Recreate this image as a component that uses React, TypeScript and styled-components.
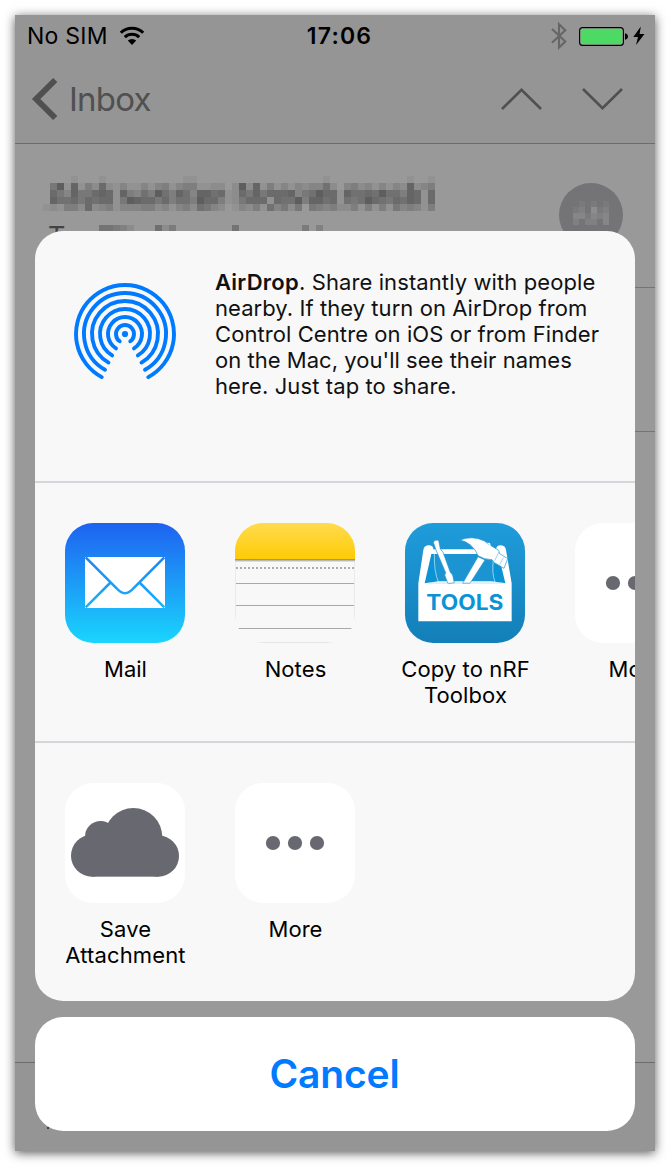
import React from "react";
import styled, { createGlobalStyle } from "styled-components";

const GlobalStyle = createGlobalStyle`
  * { box-sizing: border-box; }
  body { margin: 0; background: #fff; font-family: Inter, "Liberation Sans", sans-serif; color: #000; overflow: hidden; }
  svg { display: block; flex: none; }
  button { font: inherit; border: 0; padding: 0; background: none; }
`;

const Page = styled.main`
  height: 1166px;
  padding: 15px;
  overflow: hidden;
`;

const Phone = styled.div`
  position: relative;
  width: 640px;
  height: 1136px;
  display: flex;
  flex-direction: column;
  background: #999;
  box-shadow: 0 2px 10px rgba(0, 0, 0, 0.65);
`;

const Header = styled.header`
  height: 129px;
  background: #959595;
  border-bottom: 1px solid #6c6c6c;
`;

const StatusBar = styled.div`
  height: 40px;
  display: grid;
  grid-template-columns: 1fr auto 1fr;
  align-items: center;
  padding: 2px 10px 0 12px;
`;

const StatusGroup = styled.div<{ $end?: boolean }>`
  display: flex;
  align-items: center;
  justify-content: ${(p) => (p.$end ? "flex-end" : "flex-start")};
`;

const StatusText = styled.span<{ $bold?: boolean; $spacing: number }>`
  font-size: 23px;
  line-height: 28px;
  padding-left: ${(p) => (p.$bold ? 7 : 0)}px;
  font-weight: ${(p) => (p.$bold ? 600 : 400)};
  letter-spacing: ${(p) => p.$spacing}px;
`;

const NavBar = styled.nav`
  height: 88px;
  display: flex;
  align-items: center;
  padding: 0 32px 0 15px;
`;

const BackLabel = styled.span`
  flex: 1;
  margin-left: 11px;
  font-size: 33px;
  line-height: 40px;
  letter-spacing: -0.75px;
  color: #505050;
`;

const NavArrows = styled.div`
  display: flex;
  gap: 39px;
`;

const MessageHead = styled.section`
  height: 144px;
  margin-left: 28px;
  display: flex;
  justify-content: space-between;
  padding: 32px 32px 0 0;
  border-bottom: 1px solid #747474;
`;

const Sender = styled.div`
  display: flex;
  flex-direction: column;
`;

const Recipient = styled.div`
  display: flex;
  align-items: flex-start;
  gap: 12px;
  padding: 9px 0 0 5px;
  font-size: 27px;
  line-height: 34px;
  color: #444;

  svg {
    margin-top: 5px;
  }
`;

const Avatar = styled.div`
  width: 64px;
  height: 64px;
  margin-top: 7px;
  padding: 18px 0 0 14px;
  border-radius: 50%;
  background: #747477;
`;

const SubjectRow = styled.section`
  flex: none;
  height: 144px;
  margin-left: 28px;
  border-bottom: 1px solid #747474;
`;

const MessageBody = styled.section`
  flex: 1;
`;

const Toolbar = styled.footer`
  height: 89px;
  padding: 64px 0 0 32px;
  background: #959595;
  border-top: 1px solid #6c6c6c;
`;

const Overlay = styled.div`
  position: absolute;
  inset: 216px 20px 20px;
  display: flex;
  flex-direction: column;
  gap: 16px;
`;

const Sheet = styled.section`
  height: 770px;
  border-radius: 28px;
  background: #f8f8f8;
  overflow: hidden;
`;

const AirDropRow = styled.div`
  height: 250px;
  display: flex;
  align-items: flex-start;
`;

const AirDropMark = styled.div`
  padding: 50px 38px 0;
`;

const AirDropText = styled.p`
  margin: 0;
  padding: 38px 0 0;
  font-size: 22px;
  line-height: 26px;
  color: #111;
  white-space: nowrap;

  b {
    font-weight: 600;
    letter-spacing: 0.25px;
  }
`;

const Line = styled.span<{ $spacing: number }>`
  display: block;
  letter-spacing: ${(p) => p.$spacing}px;
`;

const ActionRow = styled.div`
  height: 260px;
  display: flex;
  padding: 40px 0 0 5px;
  border-top: 2px solid #d5d6dc;
`;

const Action = styled.button`
  flex: none;
  width: 170px;
  display: flex;
  flex-direction: column;
  align-items: center;
`;

const Tile = styled.div`
  width: 120px;
  height: 120px;
  border-radius: 28px;
  overflow: hidden;
  background: #fff;
`;

const Label = styled.span<{ $spacing?: number }>`
  margin-top: 13px;
  padding-left: 1px;
  font-size: 22px;
  line-height: 26px;
  letter-spacing: ${(p) => p.$spacing ?? 0}px;
  color: #000;
  white-space: pre-line;
`;

const CancelButton = styled.button`
  height: 114px;
  padding: 0 1px 2px 0;
  border-radius: 28px;
  background: #fff;
  color: #007aff;
  font-size: 39px;
  font-weight: 600;
  letter-spacing: -0.15px;
`;

const Mosaic = ({ rows, size, color, step }: { rows: string[]; size: number; color: string; step: number }) => (
  <svg width={rows[0].length * size} height={rows.length * size} shapeRendering="crispEdges">
    {rows.flatMap((row, y) =>
      [...row].map((v, x) =>
        v === "0" ? null : (
          <rect key={`${x}-${y}`} x={x * size} y={y * size} width={size} height={size} fill={color} opacity={Number(v) * step} />
        ),
      ),
    )}
  </svg>
);

const senderRows = [
  "00001000100000000000110000000000000000001000000000001001",
  "05918142721311313413441122029281413132336203423131328234",
  "07538557871843649648638867127585777835697718667696648717",
  "08667576771598775746649774125777176694886716569765768717",
  "12144272341333442313426532013241635250543422414141534314",
];

const recipientRows = ["66542000725000000006000000000504"];

const avatarRows = ["010101", "120412", "331323", "202203"];

const WifiIcon = () => (
  <svg width="26" height="20" viewBox="0 0 26 20" style={{ marginLeft: 11 }}>
    <g fill="none" stroke="#000" strokeWidth="3">
      <path d="M1.8 6.8A16 16 0 0 1 24.2 6.8" />
      <path d="M5.8 11.2A10.4 10.4 0 0 1 20.2 11.2" />
    </g>
    <path d="M13 19L8.8 14.6A6 6 0 0 1 17.2 14.6Z" />
  </svg>
);

const BluetoothIcon = () => (
  <svg width="16" height="28" viewBox="0 0 16 28" fill="none" stroke="#666" strokeWidth="2.1">
    <path d="M1 7L14.3 19.6L8 25.6V2.2L14.3 8.2L1 20.8" />
  </svg>
);

const BatteryIcon = () => (
  <svg width="50" height="19" viewBox="0 0 50 19" style={{ marginLeft: 12 }}>
    <rect x="0.6" y="0.6" width="43.8" height="17.8" rx="3" fill="#969696" stroke="#000" strokeWidth="1.1" />
    <rect x="1.8" y="1.8" width="41.4" height="15.4" rx="1.6" fill="#4cd964" />
    <path d="M46 6.2C50 7 50 12 46 12.8Z" />
  </svg>
);

const BoltIcon = () => (
  <svg width="12" height="20" viewBox="0 0 12 20" style={{ marginLeft: 4 }}>
    <path d="M7.8 0.5L0.3 11H5L3 19L11.5 8H6.6Z" />
  </svg>
);

const BackIcon = () => (
  <svg width="28" height="44" viewBox="0 0 28 44" fill="none" stroke="#505050" strokeWidth="6">
    <path d="M25.2 3L6.2 22L25.2 41" />
  </svg>
);

const ArrowIcon = ({ down }: { down?: boolean }) => (
  <svg width="42" height="24" viewBox="0 0 42 24" fill="none" stroke="#505050" strokeWidth="2.6">
    <path d={down ? "M2 2L21.5 21.2L41 2" : "M2 22L21.5 2.8L41 22"} />
  </svg>
);

const rings: [number, number][] = [[9, 36], [17, 32], [25, 31], [33, 30], [41, 29.2], [49, 28.4]];

const AirDropIcon = () => (
  <svg width="104" height="104" viewBox="-52 -53 104 104" fill="none" stroke="#007aff" strokeWidth="3.9" strokeLinecap="round">
    <circle r="3.1" fill="#007aff" stroke="none" />
    {rings.map(([r, deg]) => {
      const a = (deg * Math.PI) / 180;
      const x = r * Math.sin(a);
      const y = r * Math.cos(a);
      return <path key={r} d={`M${-x} ${y}A${r} ${r} 0 1 1 ${x} ${y}`} />;
    })}
  </svg>
);

const MailIcon = () => (
  <svg width="120" height="120" viewBox="45 39 360 360">
    <defs>
      <linearGradient id="mail" x2="0" y2="1">
        <stop stopColor="#1e62f0" />
        <stop offset="1" stopColor="#1ad5fd" />
      </linearGradient>
      <linearGradient id="mailFold" gradientUnits="userSpaceOnUse" x1="0" y1="39" x2="0" y2="399">
        <stop stopColor="#1e62f0" />
        <stop offset="1" stopColor="#1ad5fd" />
      </linearGradient>
    </defs>
    <rect x="45" y="39" width="360" height="360" fill="url(#mail)" />
    <rect x="105" y="141" width="240" height="153" fill="#fff" />
    <path d="M107 142L199 234Q225 265 251 234L343 142M107 292L180 219M343 292L270 219" fill="none" stroke="url(#mailFold)" strokeWidth="7.5" />
  </svg>
);

const NotesIcon = () => (
  <svg width="120" height="120" viewBox="45 39 360 360">
    <defs>
      <linearGradient id="notes" x2="0" y2="1">
        <stop stopColor="#ffdb4f" />
        <stop offset="1" stopColor="#fecb05" />
      </linearGradient>
    </defs>
    <rect x="45" y="39" width="360" height="360" fill="#f8f8f8" />
    <rect x="45" y="39" width="360" height="108" fill="url(#notes)" />
    <path d="M45 149.5H405" stroke="#9d9787" strokeWidth="5" />
    <path d="M45 154H405" stroke="#d9d9d9" strokeWidth="3" />
    <path d="M48 174H405" stroke="#acacac" strokeWidth="6" strokeDasharray="6 6" />
    <path d="M45 220.5H405M45 286.5H405M54 355.5H396" stroke="#a9a9a9" strokeWidth="3" />
    <path d="M112 397.5H340" stroke="#e6e6e6" strokeWidth="3" />
    <path d="M46.5 156V330M403.5 156V330" stroke="#ebebeb" strokeWidth="3" />
  </svg>
);

const ToolboxIcon = () => (
  <svg width="120" height="120" viewBox="45 39 360 360">
    <defs>
      <linearGradient id="tools" x2="0" y2="1">
        <stop stopColor="#1f9cdb" />
        <stop offset="1" stopColor="#137fb8" />
      </linearGradient>
    </defs>
    <rect x="45" y="39" width="360" height="360" fill="url(#tools)" />
    <path d="M122 131H328L346 220H104Z" fill="#0a94d6" />
    <path d="M133 132H316L306 213H143Z" fill="#1c94d2" />
    <path d="M133 132Q132 184 145 216M310 150Q305 190 315 216" fill="none" stroke="#d8eefa" strokeWidth="2" />
    <path d="M85 220L100 120Q102 106 116 106Q130 106 130 118L124 132L104 220L146 214H305L346 220L325 132L318 118Q320 105 333 106Q346 107 348 120L365 220V334H85Z" fill="#fff" />
    <path d="M121 118H324V132H121Z" fill="#fff" />
    <path d="M130 97Q135 87 146 91L151 117L159 127L181 187L188 195L193 219L174 221L164 195L167 188L143 132L138 120Z" fill="#fff" stroke="#1c94d2" strokeWidth="2" />
    <path d="M264 140L285 150L240 220H218Z" fill="#fff" stroke="#1c94d2" strokeWidth="2" />
    <path d="M210 90Q247 76 282 92L289 97L301 98L303 107L326 121L329 131L353 146L342 175L313 158L306 149L285 147L264 137Q249 99 210 90Z" fill="#fff" stroke="#1c94d2" strokeWidth="2" />
    <path d="M287 97L298 105M327 126L314 152M285 145L303 150M340 143L329 164" fill="none" stroke="#69b9e4" strokeWidth="2" />
    <path d="M113 219H340" stroke="#9fd3ee" strokeWidth="2" />
    <text x="109" y="299" fontFamily="Inter, sans-serif" fontSize="63" fontWeight="700" fill="#0a94d6" textLength="231" lengthAdjust="spacingAndGlyphs">
      TOOLS
    </text>
  </svg>
);

const CloudIcon = () => (
  <svg width="120" height="120" viewBox="45 39 360 360" fill="#686870">
    <circle cx="126" cy="257" r="63" />
    <circle cx="152" cy="200" r="47" />
    <circle cx="250" cy="201" r="87" />
    <circle cx="325" cy="258" r="62" />
    <rect x="126" y="200" width="199" height="120" />
  </svg>
);

const DotsIcon = () => (
  <svg width="120" height="120" viewBox="0 0 120 120" fill="#686870">
    <circle cx="38" cy="60" r="7.1" />
    <circle cx="60" cy="60" r="7.1" />
    <circle cx="82" cy="60" r="7.1" />
  </svg>
);

type Item = { label: string; icon: React.ReactNode; spacing?: number };

const shareTargets: Item[] = [
  { label: "Mail", icon: <MailIcon /> },
  { label: "Notes", icon: <NotesIcon />, spacing: 0.1 },
  { label: "Copy to nRF\nToolbox", icon: <ToolboxIcon />, spacing: 0.1 },
  { label: "More", icon: <DotsIcon /> },
];

const actions: Item[] = [
  { label: "Save\nAttachment", icon: <CloudIcon />, spacing: 0.15 },
  { label: "More", icon: <DotsIcon /> },
];

const Actions = ({ items }: { items: Item[] }) => (
  <ActionRow>
    {items.map((item, i) => (
      <Action key={i}>
        <Tile>{item.icon}</Tile>
        <Label $spacing={item.spacing}>{item.label}</Label>
      </Action>
    ))}
  </ActionRow>
);

export default function App() {
  return (
    <Page>
      <GlobalStyle />
      <Phone>
        <Header>
          <StatusBar>
            <StatusGroup>
              <StatusText $spacing={0.25}>No SIM</StatusText>
              <WifiIcon />
            </StatusGroup>
            <StatusText $bold $spacing={1.2}>17:06</StatusText>
            <StatusGroup $end>
              <BluetoothIcon />
              <BatteryIcon />
              <BoltIcon />
            </StatusGroup>
          </StatusBar>
          <NavBar>
            <BackIcon />
            <BackLabel>Inbox</BackLabel>
            <NavArrows>
              <ArrowIcon />
              <ArrowIcon down />
            </NavArrows>
          </NavBar>
        </Header>
        <MessageHead>
          <Sender>
            <Mosaic rows={senderRows} size={7} color="#222" step={0.055} />
            <Recipient>
              To:
              <Mosaic rows={recipientRows} size={7} color="#222" step={0.05} />
            </Recipient>
          </Sender>
          <Avatar>
            <Mosaic rows={avatarRows} size={6} color="#fff" step={0.045} />
          </Avatar>
        </MessageHead>
        <SubjectRow />
        <MessageBody />
        <Toolbar>
          <svg width="2" height="2">
            <rect width="2" height="2" fill="#444" />
          </svg>
        </Toolbar>
        <Overlay>
          <Sheet>
            <AirDropRow>
              <AirDropMark>
                <AirDropIcon />
              </AirDropMark>
              <AirDropText>
                <Line $spacing={0.1}><b>AirDrop</b>. Share instantly with people</Line>
                <Line $spacing={0.06}>nearby. If they turn on AirDrop from</Line>
                <Line $spacing={0.08}>Control Centre on iOS or from Finder</Line>
                <Line $spacing={0.03}>on the Mac, you'll see their names</Line>
                <Line $spacing={0.1}>here. Just tap to share.</Line>
              </AirDropText>
            </AirDropRow>
            <Actions items={shareTargets} />
            <Actions items={actions} />
          </Sheet>
          <CancelButton>Cancel</CancelButton>
        </Overlay>
      </Phone>
    </Page>
  );
}
